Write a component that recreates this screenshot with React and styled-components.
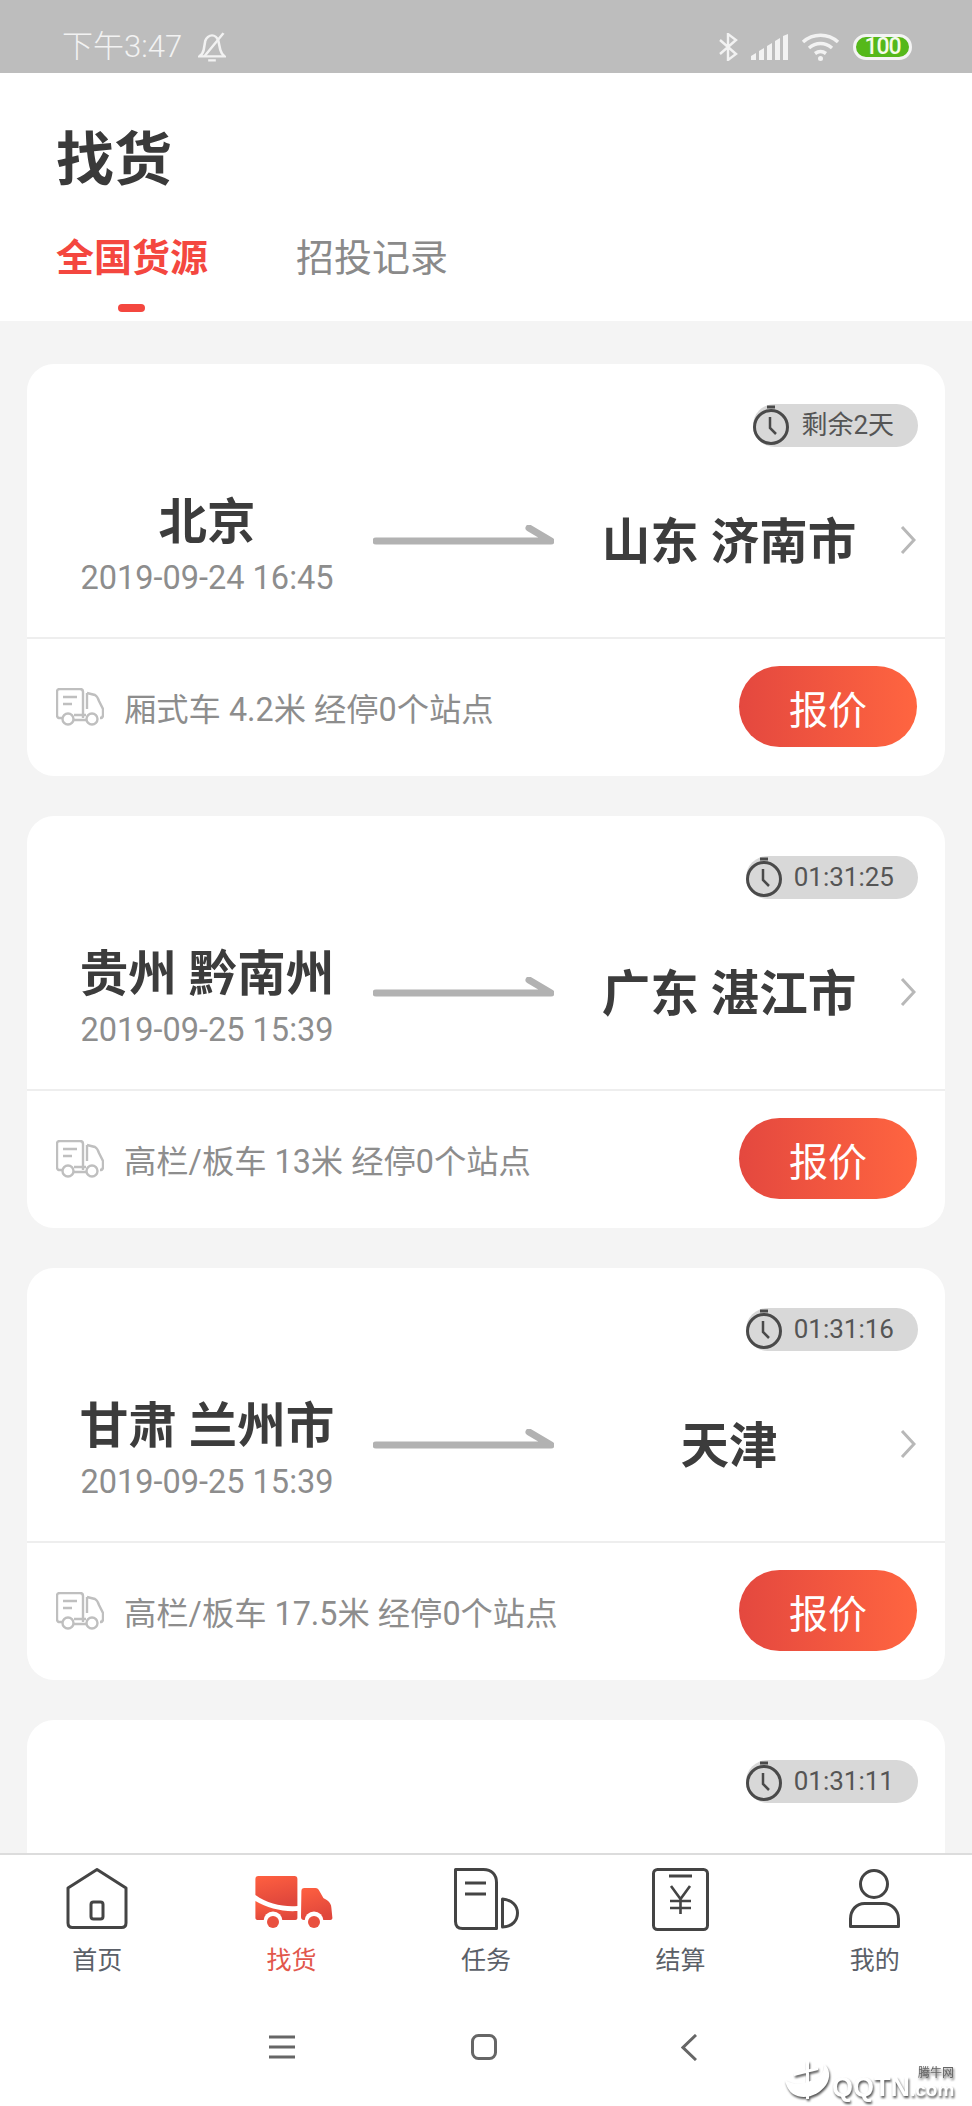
import React from "react";
import styled, { createGlobalStyle } from "styled-components";

const GlobalStyle = createGlobalStyle`
  html, body {
    margin: 0;
    padding: 0;
    background: #f4f4f4;
  }
  * {
    box-sizing: border-box;
  }
`;

const FONT = `Roboto, "Noto Sans CJK SC", sans-serif`;

const Page = styled.div`
  position: relative;
  width: 972px;
  height: 2106px;
  display: flex;
  flex-direction: column;
  overflow: hidden;
  background: #f4f4f4;
  font-family: ${FONT};
`;

const StatusBar = styled.div`
  height: 73px;
  flex: none;
  display: flex;
  align-items: center;
  padding: 20px 60px 0 62px;
  background: #bdbdbd;
  color: #f2f2f2;
`;
const StatusLeft = styled.div`
  display: flex;
  align-items: center;
  gap: 16px;
`;
const StatusTime = styled.span`
  font-size: 31px;
  font-weight: 300;
  line-height: 40px;
`;
const StatusRight = styled.div`
  margin-left: auto;
  display: flex;
  align-items: center;
  gap: 13px;
`;
const Battery = styled.div`
  width: 59px;
  height: 26px;
  border: 3px solid #f4f4f4;
  border-radius: 13px;
  background: #55b81a;
  color: #f4fbe9;
  font-size: 23px;
  font-weight: 500;
  line-height: 20px;
  letter-spacing: -1px;
  text-align: center;
`;

const Header = styled.header`
  flex: none;
  height: 248px;
  background: #fff;
  padding: 49px 0 0 56px;
`;
const Title = styled.h1`
  margin: 0;
  font-size: 58px;
  line-height: 76px;
  font-weight: 700;
  color: #3a3a3a;
`;
const Tabs = styled.div`
  display: flex;
  gap: 88px;
  margin-top: 32px;
`;
const Tab = styled.div`
  position: relative;
  font-size: 38px;
  line-height: 56px;
  font-weight: ${(p) => (p.$active ? 700 : 400)};
  color: ${(p) => (p.$active ? "#f4473f" : "#8a8a8a")};
`;
const TabMark = styled.span`
  position: absolute;
  left: 62px;
  top: 74px;
  width: 27px;
  height: 8px;
  border-radius: 4px;
  background: #f4473f;
`;

const List = styled.main`
  flex: 1;
  min-height: 0;
  overflow: hidden;
  padding: 43px 27px 0;
  display: flex;
  flex-direction: column;
  gap: 40px;
`;
const Card = styled.article`
  flex: none;
  height: 412px;
  border-radius: 27px;
  background: #fff;
`;
const CardTop = styled.div`
  height: 275px;
  padding-top: 40px;
  border-bottom: 2px solid #eeeeee;
`;
const TagRow = styled.div`
  display: flex;
  justify-content: flex-end;
  padding-right: 27px;
`;
const Tag = styled.div`
  height: 43px;
  display: flex;
  align-items: center;
  gap: 12px;
  padding-right: 24px;
  border-radius: 22px;
  background: #d8d8d8;
  color: #555;
  font-size: 26px;
  line-height: 43px;
`;
const Route = styled.div`
  display: flex;
  align-items: center;
  margin-top: 35px;
  height: 116px;
`;
const FromCol = styled.div`
  width: 300px;
  margin-left: 30px;
  text-align: center;
`;
const PlaceName = styled.div`
  padding-top: 6px;
  font-size: 48.5px;
  line-height: 70px;
  font-weight: 700;
  color: #3c3c3c;
  white-space: nowrap;
`;
const DateText = styled.div`
  font-size: 32.5px;
  line-height: 40px;
  color: #8d8d8d;
  white-space: nowrap;
`;
const ToCol = styled.div`
  width: 320px;
  margin-left: 15px;
  text-align: center;
`;
const CardBottom = styled.div`
  height: 135px;
  display: flex;
  align-items: center;
  padding: 0 28px 0 29px;
`;
const Spec = styled.span`
  margin-left: 20px;
  font-size: 32.3px;
  color: #8d8d8d;
  white-space: nowrap;
`;
const QuoteButton = styled.button`
  margin-left: auto;
  width: 178px;
  height: 81px;
  border: 0;
  border-radius: 41px;
  background: linear-gradient(90deg, #e4483f, #ff6540);
  color: #fff;
  font-family: ${FONT};
  font-size: 39px;
  padding: 0;
`;

const BottomArea = styled.footer`
  flex: none;
  height: 253px;
  background: #fff;
  border-top: 2px solid #dcdcdc;
`;
const TabBar = styled.nav`
  height: 133px;
  padding-top: 12px;
  display: grid;
  grid-template-columns: repeat(5, 1fr);
`;
const TabItem = styled.div`
  display: flex;
  flex-direction: column;
  align-items: center;
`;
const TabLabel = styled.span`
  font-size: 25px;
  line-height: 55px;
  color: ${(p) => (p.$active ? "#e2574c" : "#5b6068")};
`;
const NavIcon = styled.svg`
  display: block;
  width: 100px;
  height: 66px;
  overflow: visible;
`;
const SystemBar = styled.div`
  height: 118px;
  display: flex;
  align-items: center;
  padding-left: 269px;
`;
const SystemIcon = styled.svg`
  display: block;
  margin-left: ${(p) => p.$gap || 0}px;
`;

const Watermark = styled.div`
  position: absolute;
  right: 4px;
  bottom: 3px;
  width: 184px;
  height: 44px;
  color: #fff;
  filter: drop-shadow(1px 2px 1px #555);
`;
const WatermarkBrand = styled.span`
  position: absolute;
  left: 48px;
  bottom: 0;
  font-family: "Liberation Sans", sans-serif;
  font-size: 27px;
  font-weight: 700;
  line-height: 26px;
`;
const WatermarkDomain = styled.span`
  font-size: 19px;
`;
const WatermarkCn = styled.span`
  position: absolute;
  left: 134px;
  top: 6px;
  font-family: "Noto Sans CJK SC", sans-serif;
  font-size: 12px;
  line-height: 14px;
  color: #666;
`;

const cards = [
  { tag: "剩余2天", from: "北京", date: "2019-09-24 16:45", to: "山东 济南市", spec: "厢式车 4.2米 经停0个站点" },
  { tag: "01:31:25", from: "贵州 黔南州", date: "2019-09-25 15:39", to: "广东 湛江市", spec: "高栏/板车 13米 经停0个站点" },
  { tag: "01:31:16", from: "甘肃 兰州市", date: "2019-09-25 15:39", to: "天津", spec: "高栏/板车 17.5米 经停0个站点" },
  { tag: "01:31:11" },
];

function BellOff() {
  return (
    <svg width="28" height="30" viewBox="2 0 22 27" preserveAspectRatio="none" fill="none" stroke="#f2f2f2" strokeWidth="2">
      <path d="M3 22h20c-2-2-3-3-3.500-6l-1.500-8c-.8-3-3-5-5-5s-4.500 2-5.300 5L6.500 16C6 19 5 20.500 3 22z" />
      <path d="M10 25.500h6M22 1 7 22" />
    </svg>
  );
}

function Bluetooth() {
  return (
    <svg width="20" height="28" viewBox="0 0 20 28" fill="none" stroke="#f2f2f2" strokeWidth="2.400">
      <path d="M2 7l16 14-8 6V1l8 6L2 21" />
    </svg>
  );
}

function Signal() {
  return (
    <svg width="37" height="26" viewBox="0 0 37 26" fill="#f2f2f2">
      <path d="M0 26v-4l5-3v7zM8 26v-9l5-3v12zM16 26V12l5-3v17zM24 26V7l5-3v22zM32 26V2l5-2v26z" />
    </svg>
  );
}

function Wifi() {
  return (
    <svg width="39" height="28" viewBox="0 0 39 28" fill="none" stroke="#f2f2f2" strokeWidth="3.500">
      <path d="M2 9c10-9 25-9 35 0M8 15c7-6 16-6 23 0M14 20.500c3.500-2.500 7.500-2.500 11 0" />
      <circle cx="19.500" cy="25.500" r="2.500" fill="#f2f2f2" stroke="none" />
    </svg>
  );
}

function Stopwatch() {
  return (
    <svg width="36" height="40" viewBox="0 0 36 40" fill="none" stroke="#4a4a4a" strokeWidth="3" style={{ marginTop: -2 }}>
      <circle cx="18" cy="22" r="16.500" />
      <path d="M14 2h8" strokeWidth="3" />
      <path d="M17 12v11l6 6" strokeWidth="2.500" />
    </svg>
  );
}

function RouteArrow() {
  return (
    <svg width="181" height="30" viewBox="0 0 181 30" fill="none" stroke="#b2b2b2" strokeWidth="7" strokeLinecap="round" strokeLinejoin="round" style={{ flex: "none", marginLeft: 16 }}>
      <path d="M3 16h175L156 3" />
    </svg>
  );
}

function Chevron() {
  return (
    <svg width="16" height="28" viewBox="0 0 16 28" fill="none" stroke="#b8b8b8" strokeWidth="3" style={{ flex: "none", marginLeft: 11 }}>
      <path d="M2 1l12 13L2 27" />
    </svg>
  );
}

function TruckOutline() {
  return (
    <svg width="48" height="38" viewBox="0 0 48 38" fill="none" stroke="#bfbfbf" strokeWidth="2.400" style={{ flex: "none" }}>
      <path d="M6 30H4c-2 0-3-1-3-3V4c0-2 1-3 3-3h20c2 0 3 1 3 3v26" />
      <path d="M31 5l8 2c2 1 3 3 4 6l4 8v6c0 2-1 3-3 3" />
      <path d="M31 5v16" />
      <path d="M7 9h14M7 16h9M18 27h12M18 32h12" />
      <circle cx="12" cy="31" r="5.500" />
      <circle cx="36" cy="31" r="5.500" />
    </svg>
  );
}

function HomeIcon() {
  return (
    <NavIcon viewBox="0 0 100 66" fill="none" stroke="#444" strokeWidth="3">
      <path d="M50 2.500 79 21v35c0 3-1.500 4.500-4.500 4.500h-49C22.500 60.500 21 59 21 56V21z" strokeLinejoin="round" />
      <rect x="44" y="35" width="12" height="17" rx="2.500" />
    </NavIcon>
  );
}

function ActiveTruckIcon() {
  return (
    <NavIcon viewBox="0 0 100 66">
      <defs>
        <linearGradient id="truckFill" x1="0" y1="0" x2="0.300" y2="1">
          <stop offset="0" stopColor="#ff6040" />
          <stop offset="1" stopColor="#e0473c" />
        </linearGradient>
      </defs>
      <path d="M13.400 28V12c0-2 1-3 3-3h36c2 0 3 1 3 3v27c-14 1-30-2-42-11z" fill="url(#truckFill)" />
      <path d="M13.400 34c12 7 27 11 42 10v7c0 1-1 2-2 2H15.400c-1 0-2-1-2-2z" fill="url(#truckFill)" />
      <path d="M59.400 24c0-2 1-3 3-3h11c2 0 3 1 4 3l4 7c1 1 8 3 8 10l1 10c0 1-1 2-2 2H62c-2 0-3-1-3-3z" fill="url(#truckFill)" />
      <circle cx="31" cy="54" r="9.500" fill="#fff" />
      <circle cx="31" cy="55" r="6" fill="#e9503f" />
      <circle cx="72" cy="54" r="9.500" fill="#fff" />
      <circle cx="72" cy="55" r="6" fill="#e9503f" />
    </NavIcon>
  );
}

function TaskIcon() {
  return (
    <NavIcon viewBox="0 0 100 66" fill="none" stroke="#444" strokeWidth="3">
      <path d="M19.500 2.500h28c8 0 13 5 13 13v46h-34c-5 0-7-3-7-7z" strokeLinejoin="round" />
      <path d="M29 16h21M29 27h21" />
      <path d="M66.500 32c10 1 15 7 15 14s-5 14-15 14z" strokeLinejoin="round" />
    </NavIcon>
  );
}

function YenIcon() {
  return (
    <NavIcon viewBox="0 0 100 66" fill="none" stroke="#444" strokeWidth="3">
      <rect x="23.500" y="2.500" width="54" height="60" rx="4" />
      <path d="M39 9h23" />
      <path d="M41 19l9.500 13L60 19M50.500 32v15M40 34h21M40 41h21" strokeWidth="2.600" />
    </NavIcon>
  );
}

function PersonIcon() {
  return (
    <NavIcon viewBox="0 0 100 66" fill="none" stroke="#444" strokeWidth="3">
      <circle cx="49" cy="17" r="13.500" />
      <path d="M25.500 59.500V52c0-9 6-15.500 14-15.500h19c8 0 15 6.500 15 15.500v7.500z" strokeLinejoin="round" />
    </NavIcon>
  );
}

const navItems = [
  { label: "首页", icon: <HomeIcon /> },
  { label: "找货", icon: <ActiveTruckIcon />, active: true },
  { label: "任务", icon: <TaskIcon /> },
  { label: "结算", icon: <YenIcon /> },
  { label: "我的", icon: <PersonIcon /> },
];

function App() {
  return (
    <Page>
      <GlobalStyle />
      <StatusBar>
        <StatusLeft>
          <StatusTime>下午3:47</StatusTime>
          <BellOff />
        </StatusLeft>
        <StatusRight>
          <Bluetooth />
          <Signal />
          <Wifi />
          <Battery>100</Battery>
        </StatusRight>
      </StatusBar>

      <Header>
        <Title>找货</Title>
        <Tabs>
          <Tab $active>
            全国货源
            <TabMark />
          </Tab>
          <Tab>招投记录</Tab>
        </Tabs>
      </Header>

      <List>
        {cards.map((card) => (
          <Card key={card.tag}>
            <CardTop>
              <TagRow>
                <Tag>
                  <Stopwatch />
                  {card.tag}
                </Tag>
              </TagRow>
              {card.from && (
                <Route>
                  <FromCol>
                    <PlaceName>{card.from}</PlaceName>
                    <DateText>{card.date}</DateText>
                  </FromCol>
                  <RouteArrow />
                  <ToCol>
                    <PlaceName>{card.to}</PlaceName>
                  </ToCol>
                  <Chevron />
                </Route>
              )}
            </CardTop>
            {card.from && (
              <CardBottom>
                <TruckOutline />
                <Spec>{card.spec}</Spec>
                <QuoteButton>报价</QuoteButton>
              </CardBottom>
            )}
          </Card>
        ))}
      </List>

      <BottomArea>
        <TabBar>
          {navItems.map((item) => (
            <TabItem key={item.label}>
              {item.icon}
              <TabLabel $active={item.active}>{item.label}</TabLabel>
            </TabItem>
          ))}
        </TabBar>
        <SystemBar>
          <SystemIcon width="26" height="24" viewBox="0 0 26 24" fill="none" stroke="#666" strokeWidth="3">
            <path d="M0 2h26M0 12h26M0 22h26" />
          </SystemIcon>
          <SystemIcon $gap={176} width="26" height="26" viewBox="0 0 26 26" fill="none" stroke="#666" strokeWidth="3">
            <rect x="1.500" y="1.500" width="23" height="23" rx="6" />
          </SystemIcon>
          <SystemIcon $gap={184} width="16" height="27" viewBox="0 0 16 27" fill="none" stroke="#666" strokeWidth="3">
            <path d="M15 1 2 13.500 15 26" />
          </SystemIcon>
        </SystemBar>
      </BottomArea>

      <Watermark>
        <svg width="48" height="44" viewBox="0 0 48 44" fill="#fff">
          <path d="M1 21c8 5 18 5 30-1 6-3 10-8 9-15 6 4 7 14 2 21-7 10-22 16-33 9-4-3-7-8-8-14z" />
          <path d="M22 2h3v38h-3zM10 14l24-6v3l-24 6z" />
        </svg>
        <WatermarkBrand>
          QQTN<WatermarkDomain>.com</WatermarkDomain>
        </WatermarkBrand>
        <WatermarkCn>腾牛网</WatermarkCn>
      </Watermark>
    </Page>
  );
}

export default App;
